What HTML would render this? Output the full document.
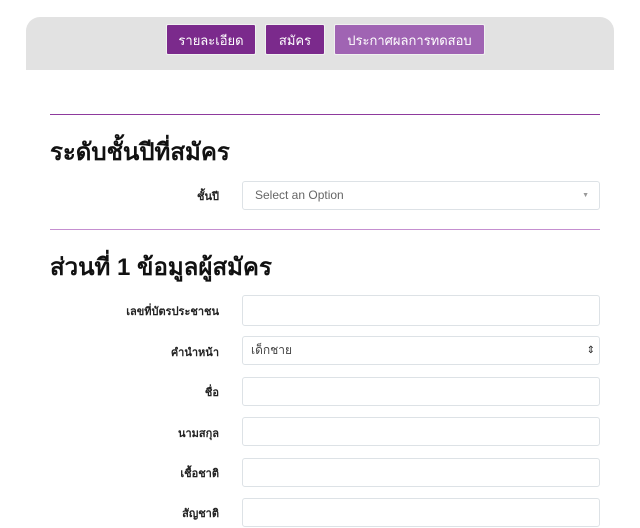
<!DOCTYPE html>
<html><head><meta charset="utf-8"><style>
body{margin:0;width:640px;height:528px;background:#fff;overflow:hidden;font-family:"Liberation Sans","Noto Sans CJK SC",sans-serif;position:relative}
.hdr{position:absolute;left:26px;top:17px;width:588px;height:53px;background:#e2e2e2;border-radius:14px 14px 0 0}
.btn{position:absolute;top:24px;height:31px;color:#fff;font-size:13px;line-height:31px;text-align:center;border:1px solid #f0f0f0;box-sizing:border-box;border-radius:2px}
.hr{position:absolute;left:50px;width:550px;height:1px}
h2{position:absolute;left:50px;margin:0;font-size:23px;font-weight:bold;color:#111;line-height:30px}
.lbl{position:absolute;right:421px;font-size:11px;font-weight:bold;color:#222;text-align:right}
.in{position:absolute;left:242px;width:358px;height:29px;border:1px solid #dde2e6;border-radius:3px;box-sizing:border-box;font-size:12px;color:#444;line-height:27px;padding-left:8px}
</style></head><body>
<div class="hdr"></div>
<div class="btn" style="left:166px;width:90px;background:#7b2a8c">รายละเอียด</div>
<div class="btn" style="left:265px;width:60px;background:#7b2a8c">สมัคร</div>
<div class="btn" style="left:334px;width:151px;background:#a064b3">ประกาศผลการทดสอบ</div>
<div class="hr" style="top:114px;background:#8e3a9d"></div>
<h2 style="top:138px;font-size:24px">ระดับชั้นปีที่สมัคร</h2>
<div class="lbl" style="top:187px">ชั้นปี</div>
<div class="in" style="top:181px;height:29px;color:#666;padding-left:12px">Select an Option<span style="position:absolute;right:10px;font-size:7px;color:#999">▼</span></div>
<div class="hr" style="top:229px;background:#c58fd0"></div>
<h2 style="top:253px;font-size:24px">ส่วนที่ 1 ข้อมูลผู้สมัคร</h2>
<div class="lbl" style="top:302px">เลขที่บัตรประชาชน</div>
<div class="in" style="top:295px;height:31px"></div>
<div class="lbl" style="top:343px">คำนำหน้า</div>
<div class="in" style="top:336px">เด็กชาย<span style="position:absolute;right:4px;font-size:10px;color:#222;line-height:27px">⇕</span></div>
<div class="lbl" style="top:383px">ชื่อ</div>
<div class="in" style="top:377px"></div>
<div class="lbl" style="top:424px">นามสกุล</div>
<div class="in" style="top:417px"></div>
<div class="lbl" style="top:464px">เชื้อชาติ</div>
<div class="in" style="top:458px"></div>
<div class="lbl" style="top:504px">สัญชาติ</div>
<div class="in" style="top:498px"></div>
</body></html>
